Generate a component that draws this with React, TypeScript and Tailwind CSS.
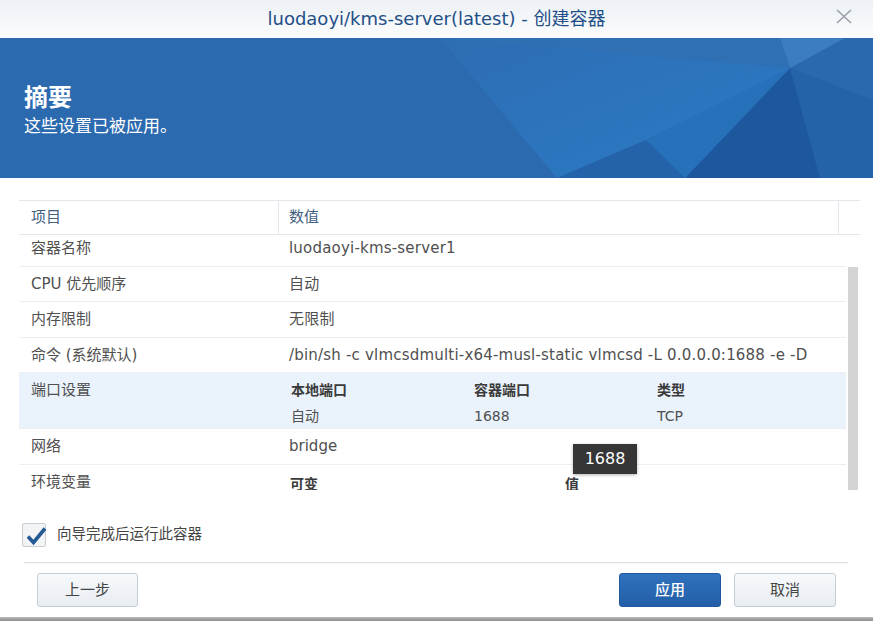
import React from "react";

const rows = [
  { label: "容器名称", value: "luodaoyi-kms-server1" },
  { label: "CPU 优先顺序", value: "自动" },
  { label: "内存限制", value: "无限制" },
  { label: "命令 (系统默认)", value: "/bin/sh -c vlmcsdmulti-x64-musl-static vlmcsd -L 0.0.0.0:1688 -e -D" },
];

function BannerArt() {
  return (
    <svg className="absolute inset-0" width="873" height="140" viewBox="0 0 873 140">
      <defs>
        <linearGradient id="mid" x1="0" y1="0" x2="1" y2="1">
          <stop offset="0" stopColor="#2d6db3" />
          <stop offset="1" stopColor="#2b7bc6" />
        </linearGradient>
      </defs>
      <polygon points="440,0 780,0 790,30" fill="#2f6fb4" />
      <polygon points="440,0 790,30 646,102 557,140" fill="url(#mid)" />
      <polygon points="780,0 873,0 873,62 790,30" fill="#2b69ae" />
      <polygon points="780,0 845,0 790,30" fill="#3b7dc0" />
      <polygon points="790,30 873,62 873,140 820,140" fill="#2462aa" />
      <polygon points="790,30 820,140 685,140" fill="#1d589f" />
      <polygon points="646,102 790,30 685,140" fill="#2770ba" />
      <polygon points="557,140 646,102 685,140" fill="#2463a9" />
    </svg>
  );
}

export default function App() {
  return (
    <div className="relative w-[873px] h-[621px] bg-white flex flex-col overflow-hidden font-['DejaVu_Sans','Noto_Sans_CJK_SC',sans-serif] text-[15px] text-[#505050]">
      {/* title bar */}
      <header className="relative h-[38px] shrink-0 flex items-center justify-center bg-gradient-to-b from-[#edf1f5] to-[#fbfcfd]">
        <h1 className="text-[18px] text-[#1f4f87] leading-none">luodaoyi/kms-server(latest) - 创建容器</h1>
        <svg className="absolute right-[21px] top-[9px]" width="16" height="15" viewBox="0 0 16 15">
          <path d="M1 1 L15 14 M15 1 L1 14" stroke="#9aa1a8" strokeWidth="1.7" fill="none" />
        </svg>
      </header>

      {/* banner */}
      <section className="relative h-[140px] shrink-0 bg-[#2c6ab0] overflow-hidden">
        <BannerArt />
        <div className="relative pl-[24px] pt-[45px] text-white">
          <div className="text-[24px] leading-[30px] font-bold">摘要</div>
          <div className="text-[17px] leading-[22px] mt-[2px]">这些设置已被应用。</div>
        </div>
      </section>

      <main className="flex-1 flex flex-col pl-[19px] pr-[13px] pt-[22px]">
        {/* table header */}
        <div className="flex h-[35px] border-y border-[#e3e6ea] text-[#42607f]">
          <div className="w-[260px] border-r border-[#e3e6ea] pl-[12px] flex items-center">项目</div>
          <div className="w-[560px] border-r border-[#e3e6ea] pl-[10px] flex items-center">数值</div>
          <div className="flex-1" />
        </div>

        {/* table body */}
        <div className="flex h-[255px]">
          <div className="w-[827px] overflow-hidden">
            <div className="-mt-[4px]">
              {rows.map((r) => (
                <div key={r.label} className="flex py-[7px] leading-[20.5px] border-b border-[#eceef0]">
                  <div className="w-[260px] pl-[12px] shrink-0">{r.label}</div>
                  <div className="pl-[10px] whitespace-nowrap tracking-[0.2px]">{r.value}</div>
                </div>
              ))}
              <div className="flex pt-[7px] pb-[2px] bg-[#eaf3fc] border-b border-[#eceef0]">
                <div className="w-[260px] pl-[12px] shrink-0 leading-[20px]">端口设置</div>
                <div className="pl-[12px] grid grid-cols-[183px_183px_120px] gap-y-[6px] text-[14px] leading-[20px]">
                  <div className="font-bold text-[#3a3a3a]">本地端口</div>
                  <div className="font-bold text-[#3a3a3a]">容器端口</div>
                  <div className="font-bold text-[#3a3a3a]">类型</div>
                  <div>自动</div>
                  <div>1688</div>
                  <div>TCP</div>
                </div>
              </div>
              <div className="flex py-[7px] leading-[20.5px] border-b border-[#eceef0]">
                <div className="w-[260px] pl-[12px] shrink-0">网络</div>
                <div className="pl-[10px]">bridge</div>
              </div>
              <div className="flex py-[7px] leading-[20.5px]">
                <div className="w-[260px] pl-[12px] shrink-0">环境变量</div>
                <div className="pl-[11px] grid grid-cols-[275px_100px] text-[14px] font-bold text-[#3a3a3a] pt-[2px]">
                  <div>可变</div>
                  <div>值</div>
                </div>
              </div>
            </div>
          </div>
          <div className="flex-1 pl-[2px]">
            <div className="mt-[32px] w-[10px] h-[223px] bg-[#d4d4d4]" />
          </div>
        </div>

        {/* run checkbox */}
        <label className="flex items-center mt-[33px] pl-[3px] h-[24px]">
          <span className="relative w-[24px] h-[24px] border border-[#c9ced3] bg-[#f3f4f5] rounded-[2px]">
            <svg className="absolute left-[1px] top-[1px]" width="24" height="22" viewBox="0 0 24 22">
              <path d="M4 11.5 L9.5 17.5 L21 3.5" stroke="#245a94" strokeWidth="3.6" fill="none" strokeLinejoin="miter" />
            </svg>
          </span>
          <span className="ml-[11px] text-[14.5px] text-[#444]">向导完成后运行此容器</span>
        </label>

        <div className="mt-[15px] ml-[5px] mr-[12px] h-px bg-[#dcdfe3] shadow-[0_1px_1px_rgba(0,0,0,0.04)]" />

        {/* buttons */}
        <div className="flex items-center mt-[10px] pl-[18px] pr-[24px]">
          <button className="w-[101px] h-[34px] rounded-[3px] border border-[#c6cdd4] bg-gradient-to-b from-[#f7f9fb] to-[#e8edf2] text-[15px] text-[#444]">
            上一步
          </button>
          <div className="flex-1" />
          <button className="w-[102px] h-[34px] rounded-[3px] border border-[#1f58a0] bg-gradient-to-b from-[#2f72bd] to-[#235fa8] text-[15px] text-white font-medium">
            应用
          </button>
          <button className="ml-[13px] w-[102px] h-[34px] rounded-[3px] border border-[#c6cdd4] bg-gradient-to-b from-[#f7f9fb] to-[#e8edf2] text-[15px] text-[#444]">
            取消
          </button>
        </div>
      </main>

      <div className="h-[4px] shrink-0 bg-gradient-to-b from-[#b9b9b9] to-[#8c8c8c]" />

      {/* tooltip */}
      <div className="absolute left-[573px] top-[444px] w-[64px] h-[30px] bg-[#363636] text-white text-[16px] flex items-center justify-center shadow-[0_1px_3px_rgba(0,0,0,0.3)]">
        1688
      </div>
    </div>
  );
}
